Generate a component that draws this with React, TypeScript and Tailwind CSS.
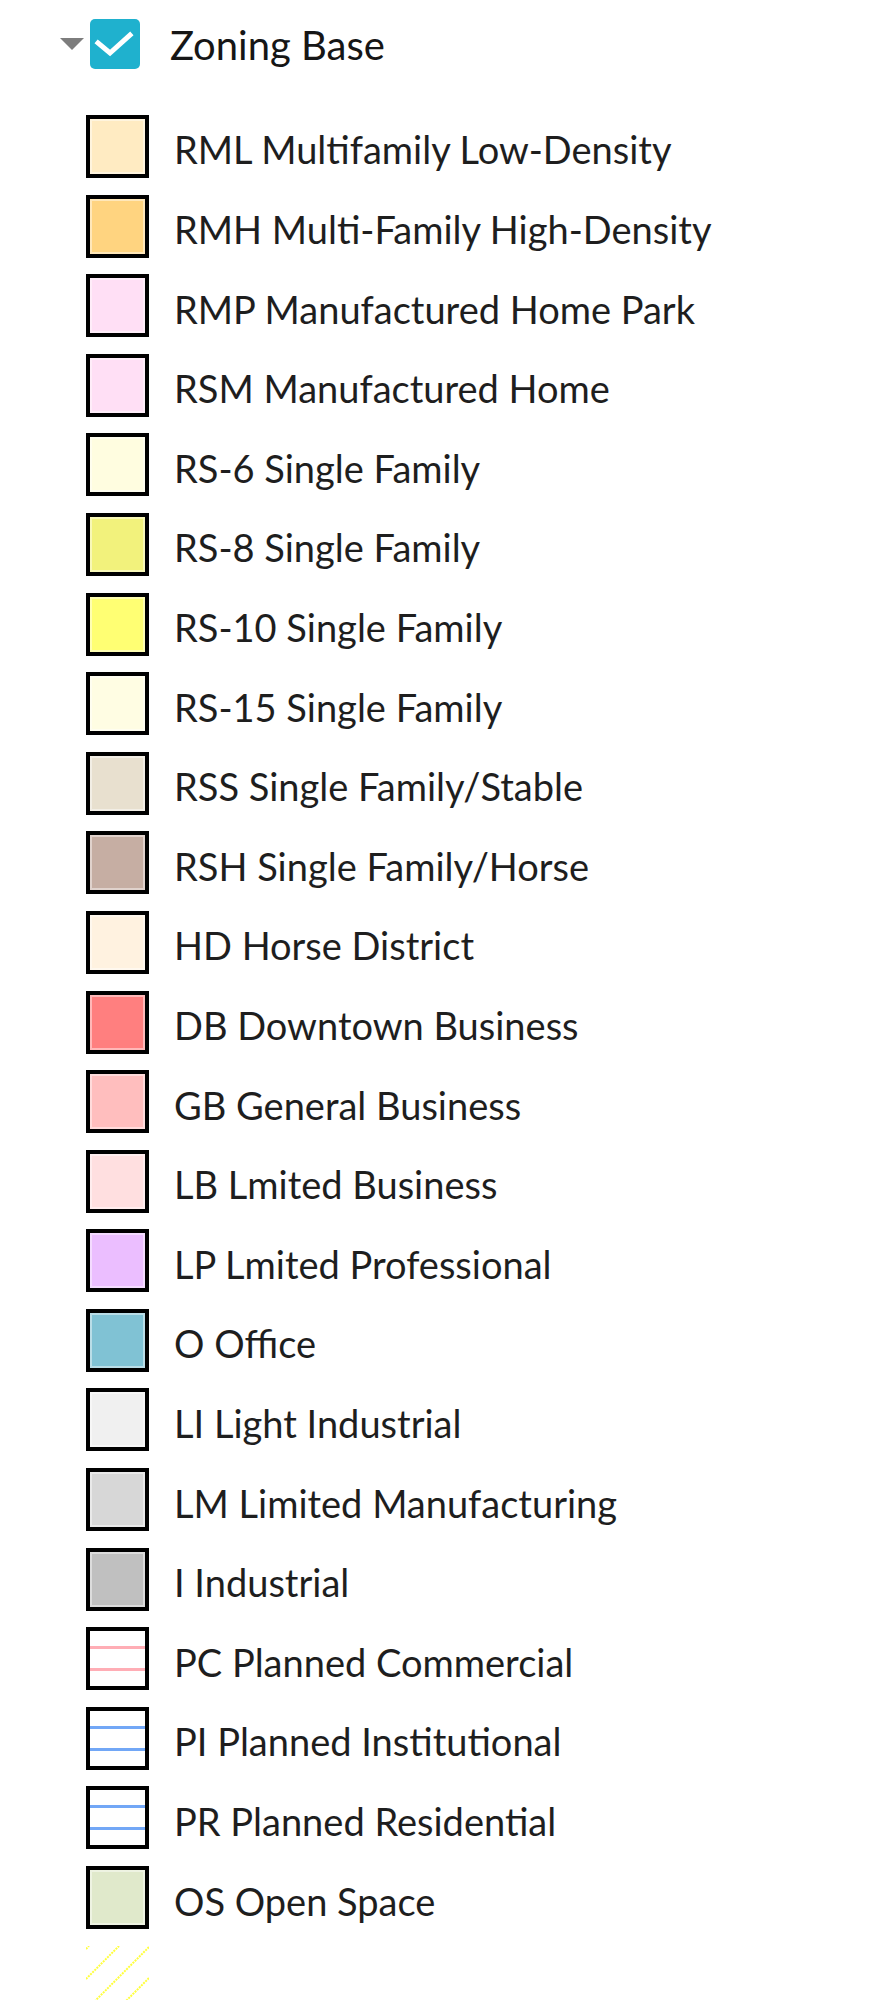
import React from "react";

type Zone = {
  label: string;
  fill?: string;
  lines?: string;
  hatch?: boolean;
};

const ZONES: Zone[] = [
  { label: "RML Multifamily Low-Density", fill: "#FFEBC2" },
  { label: "RMH Multi-Family High-Density", fill: "#FFD480" },
  { label: "RMP Manufactured Home Park", fill: "#FFDFF5" },
  { label: "RSM Manufactured Home", fill: "#FFDFF5" },
  { label: "RS-6 Single Family", fill: "#FFFDE0" },
  { label: "RS-8 Single Family", fill: "#F2F27C" },
  { label: "RS-10 Single Family", fill: "#FFFF73" },
  { label: "RS-15 Single Family", fill: "#FFFDE3" },
  { label: "RSS Single Family/Stable", fill: "#E8E0CF" },
  { label: "RSH Single Family/Horse", fill: "#C6AEA3" },
  { label: "HD Horse District", fill: "#FFF2E0" },
  { label: "DB Downtown Business", fill: "#FF7F7F" },
  { label: "GB General Business", fill: "#FFBEBE" },
  { label: "LB Lmited Business", fill: "#FFDFE0" },
  { label: "LP Lmited Professional", fill: "#EBBEFF" },
  { label: "O Office", fill: "#80C2D4" },
  { label: "LI Light Industrial", fill: "#F0F0F0" },
  { label: "LM Limited Manufacturing", fill: "#D7D7D7" },
  { label: "I Industrial", fill: "#C0C0C0" },
  { label: "PC Planned Commercial", lines: "#FFADB5" },
  { label: "PI Planned Institutional", lines: "#72A7F6" },
  { label: "PR Planned Residential", lines: "#72A7F6" },
  { label: "OS Open Space", fill: "#E0E9CB" },
  { label: "", hatch: true },
];

function Swatch({ zone }: { zone: Zone }) {
  if (zone.hatch) {
    return (
      <svg width="63" height="63" viewBox="0 0 63 63" className="shrink-0">
        {[3, 33, 64, 95].map((d) => (
          <line
            key={d}
            x1={0}
            y1={d}
            x2={d}
            y2={0}
            stroke="#FFFF3C"
            strokeWidth="2"
            strokeDasharray="2,1"
          />
        ))}
      </svg>
    );
  }
  if (zone.lines) {
    return (
      <div className="relative w-[63px] h-[63px] shrink-0 border-4 border-black bg-white">
        <div className="absolute left-0 right-0 top-[15px] h-[3px]" style={{ backgroundColor: zone.lines }} />
        <div className="absolute left-0 right-0 top-[37px] h-[3px]" style={{ backgroundColor: zone.lines }} />
      </div>
    );
  }
  return (
    <div
      className="w-[63px] h-[63px] shrink-0 border-4 border-black shadow-[inset_0_0_0_2px_rgba(255,255,255,0.45)]"
      style={{ backgroundColor: zone.fill }}
    />
  );
}

export default function App() {
  return (
    <div className="w-[873px] min-h-[2000px] bg-white font-['Lato',sans-serif] overflow-hidden">
      {/* Layer header */}
      <div className="flex items-center h-[50px] mt-[19px] pl-[60px]">
        <svg width="24" height="13" viewBox="0 0 24 13" className="shrink-0">
          <path d="M0 0 L24 0 L12 12 Z" fill="#7d7d7d" />
        </svg>
        <div className="ml-[6px] w-[50px] h-[50px] rounded-[5px] bg-[#1FB1CE] flex items-center justify-center shrink-0">
          <svg width="50" height="50" viewBox="0 0 50 50">
            <path
              d="M8 24 L20 34 L40 16"
              fill="none"
              stroke="white"
              strokeWidth="5"
              strokeLinecap="square"
            />
          </svg>
        </div>
        <span className="ml-[30px] pt-[2px] text-[40px] leading-none text-[#161616] whitespace-nowrap">
          Zoning Base
        </span>
      </div>

      {/* Legend */}
      <div className="mt-[37.7px] pl-[86px] flex flex-col">
        {ZONES.map((z, i) => (
          <div key={i} className="flex items-center h-[79.6px] shrink-0">
            <Swatch zone={z} />
            {z.label && (
              <span className="ml-[25px] pt-[6px] text-[38px] leading-none text-[#1e1e1e] whitespace-nowrap">
                {z.label}
              </span>
            )}
          </div>
        ))}
      </div>
    </div>
  );
}
